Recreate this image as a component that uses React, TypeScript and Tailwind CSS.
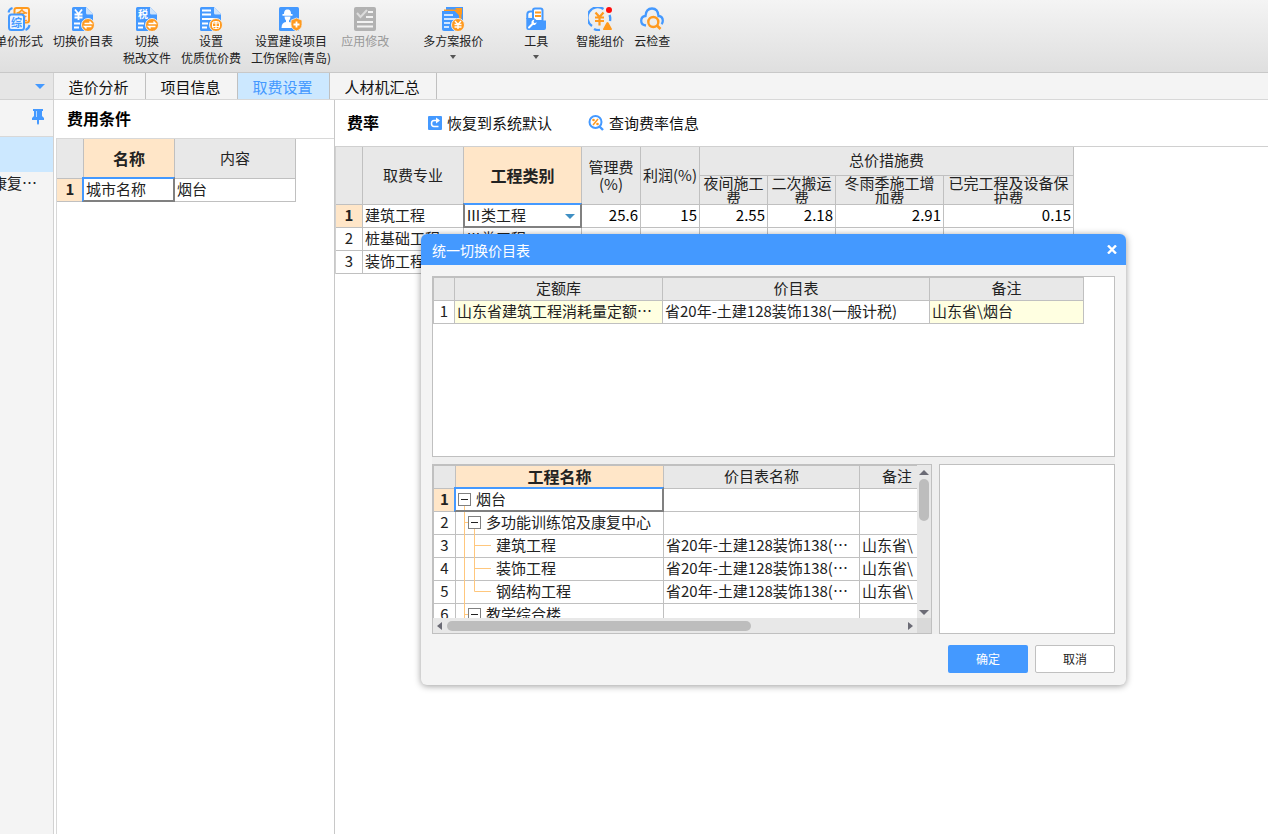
import { clsx } from "clsx";
import { useState, type ReactNode } from "react";

const BLUE = "#4499ff";
const ORANGE = "#ff9a1f";

function DocBase({ children }: { children?: ReactNode }) {
  return (
    <svg viewBox="0 0 24 24" className="size-6">
      <path d="M2.5 0H15l7 7v11h-2v6H2.500Q1 24 1 22.500V1.500Q1 0 2.500 0z" fill={BLUE} />
      <path d="M15 0l7.500 7.500H16.500Q15 7.500 15 6z" fill="#cfe4fb" />
      {children}
    </svg>
  );
}

function SwapBadge() {
  return (
    <>
      <circle cx="17" cy="18" r="6.500" fill={ORANGE} stroke="#eeeeee" />
      <path d="M13.500 16.500h7l-2-2M20.500 19.500h-7l2 2" fill="none" stroke="#fff" strokeWidth="1.400" />
    </>
  );
}

function UnitPriceIcon() {
  return (
    <svg viewBox="0 0 24 24" className="size-6">
      <rect x="7.500" y="1" width="14.500" height="14.500" rx="2" fill="#fff3e2" stroke={ORANGE} strokeWidth="2" />
      <text x="9" y="13" fontSize="12" fontWeight="700" fill={ORANGE}>金</text>
      <rect x="2" y="7.500" width="15" height="15.500" rx="2.500" fill="#eaf3ff" stroke={BLUE} strokeWidth="2" />
      <text x="4" y="19.500" fontSize="11" fontWeight="700" fill={BLUE}>综</text>
      <path d="M1.500 5.500q.5-3.500 4-4.500M22.500 18q-.5 3.500-4 5" fill="none" stroke={BLUE} strokeWidth="2" />
    </svg>
  );
}

function SwitchPriceIcon() {
  return (
    <DocBase>
      <path d="M4 2.500l3.500 4.500L11 2.500M3.500 7.500h8M3.500 10.500h8M7.500 7v6M3 16.500h6M3 20.500h5" fill="none" stroke="#fff" strokeWidth="1.800" />
      <SwapBadge />
    </DocBase>
  );
}

function SwitchTaxIcon() {
  return (
    <DocBase>
      <text x="3" y="11" fontSize="10" fontWeight="700" fill="#fff">税</text>
      <path d="M3 16.500h6M3 20.500h5" stroke="#fff" strokeWidth="1.800" />
      <SwapBadge />
    </DocBase>
  );
}

function QualityFeeIcon() {
  return (
    <DocBase>
      <path d="M3 3.500h9M3 7.500h9M3 12h13M3 16.500h6M3 20.500h5" stroke="#fff" strokeWidth="1.800" />
      <circle cx="17" cy="18" r="6.500" fill={ORANGE} stroke="#eeeeee" />
      <path d="M13 16h8M13 19.500h8M17 14v8" fill="none" stroke="#fff" strokeWidth="1.200" />
      <rect x="13.500" y="14.500" width="7" height="7" rx="2" fill="none" stroke="#fff" strokeWidth="1" />
    </DocBase>
  );
}

function InsuranceIcon() {
  return (
    <svg viewBox="0 0 24 24" className="size-6 overflow-visible">
      <rect width="20" height="24" rx="1.500" fill={BLUE} />
      <path d="M5 7q0-4 2.500-4.500h2q2.500.5 2.500 4.500h1.500v1.800h-10V7zM5.500 9.500h6q0 2.500-1.500 4v1.500h-3v-1.500q-1.500-1.500-1.500-4z" fill="#fff" />
      <path d="M2.500 21q0-5.500 4.500-6h3q4.500.5 4.500 6z" fill="#fff" />
      <path d="M17.500 11l5.500 2.200v4.300q0 4.500-5.500 6.500-5.500-2-5.500-6.500v-4.300z" fill={ORANGE} stroke="#eeeeee" strokeWidth=".8" />
      <path d="M17.500 14.500v6M14.500 17.500h6" stroke="#fff" strokeWidth="1.800" />
    </svg>
  );
}

function ApplyIcon() {
  return (
    <svg viewBox="0 0 24 24" className="size-6">
      <rect x="1" width="22" height="24" rx="2" fill="#b2b2b2" />
      <path d="M4 6l3.500 4L14 3" fill="none" stroke="#dcdcdc" strokeWidth="2" />
      <path d="M15 5h5M13 10h7M4 15h16M4 19.500h16" stroke="#f2f2f2" strokeWidth="2" />
    </svg>
  );
}

function SchemeIcon() {
  return (
    <svg viewBox="0 0 24 24" className="size-6">
      <path d="M5 3V0h17v14" fill={BLUE} />
      <path d="M3 4V2.500h12.500q4.500 1 5 6V14h-3V8l-4-4z" fill={ORANGE} />
      <path d="M14 1h7v7z" fill={ORANGE} />
      <path d="M1 4h12.500l4.500 4.500V24H3q-2 0-2-2z" fill={BLUE} />
      <path d="M3 8h9M3 12h12M3 16h6M3 20h5" stroke="#fff" strokeWidth="1.600" />
      <circle cx="17" cy="18" r="6.500" fill={ORANGE} stroke="#eeeeee" />
      <path d="M14 14l3 3.500 3-3.500M13.500 17.500h7M13.500 20h7M17 17v5" fill="none" stroke="#fff" strokeWidth="1.400" />
    </svg>
  );
}

function ToolsIcon() {
  return (
    <svg viewBox="0 0 24 24" className="size-6">
      <path d="M3.300 12V7.500q0-3 3-3H9" fill="#fff" stroke={BLUE} strokeWidth="2" />
      <path d="M9 14V3.500q0-2 2-2h5.500q2 0 2 2V14z" fill="#fff" stroke={BLUE} strokeWidth="2" />
      <path d="M11 5.500h6M11 9h6" stroke={ORANGE} strokeWidth="1.800" />
      <path d="M2.300 11H10l3 2.500h9V21q0 2-2 2H4.300q-2 0-2-2z" fill={BLUE} />
      <path d="M5 20.500l4-4" stroke="#fff" strokeWidth="2" strokeLinecap="round" />
      <path d="M10.500 12.500q-3.500.5-3 3.500.5 2.500 3.500 2l2-2.500-2.500.5-1-1z" fill="#fff" />
    </svg>
  );
}

function SmartPriceIcon() {
  return (
    <svg viewBox="0 0 24 24" className="size-6">
      <path d="M15.500 2A10 10 0 0 0 4 19M21.500 8q1.200 3 .5 6M6 22q2.500 1.500 6 1" fill="none" stroke={BLUE} strokeWidth="2.300" />
      <path d="M7.500 5.500l4 4.500 4-4.500M7 10.500h9M7 14h9M11.500 10v8.500" fill="none" stroke={ORANGE} strokeWidth="2.200" />
      <path d="M19.500 15q1 0 1.500 1.500l3 5.500q0 1-1 1h-7q-1.500 0-1-1l3-5.500q.5-1.500 1.500-1.500z" fill={ORANGE} />
      <circle cx="21" cy="3" r="3" fill="#ff0d0d" />
    </svg>
  );
}

function CloudCheckIcon() {
  return (
    <svg viewBox="0 0 24 24" className="size-6">
      <path d="M6 18.500Q1.200 18 1.200 13.700 1.200 9.500 5.500 9 6 1.500 12 1.500T18.500 9q4.300.5 4.300 4.700 0 2.300-1.300 3.500" fill="none" stroke={BLUE} strokeWidth="2.300" />
      <circle cx="13.300" cy="15" r="5" fill="none" stroke={ORANGE} strokeWidth="2.400" />
      <path d="M17 18.500l3.500 3.500" stroke={ORANGE} strokeWidth="2.600" />
    </svg>
  );
}

type Tool = {
  lines: string[];
  icon: ReactNode;
  className?: string;
  disabled?: boolean;
  menu?: boolean;
};

const tools: Tool[] = [
  { lines: ["单价形式"], icon: <UnitPriceIcon />, className: "-ml-[5px]" },
  { lines: ["切换价目表"], icon: <SwitchPriceIcon /> },
  { lines: ["切换", "税改文件"], icon: <SwitchTaxIcon /> },
  { lines: ["设置", "优质优价费"], icon: <QualityFeeIcon /> },
  { lines: ["设置建设项目", "工伤保险(青岛)"], icon: <InsuranceIcon /> },
  { lines: ["应用修改"], icon: <ApplyIcon />, disabled: true },
  { lines: ["多方案报价"], icon: <SchemeIcon />, className: "ml-6", menu: true },
  { lines: ["工具"], icon: <ToolsIcon />, className: "ml-[31px]", menu: true },
  { lines: ["智能组价"], icon: <SmartPriceIcon />, className: "ml-[18px]" },
  { lines: ["云检查"], icon: <CloudCheckIcon /> },
];

const tabs = ["造价分析", "项目信息", "取费设置", "人材机汇总"];

const rates = [
  { name: "建筑工程", kind: "Ⅲ类工程", values: ["25.6", "15", "2.55", "2.18", "2.91", "0.15"] },
  { name: "桩基础工程", kind: "Ⅲ类工程", values: ["", "", "", "", "", ""] },
  { name: "装饰工程", kind: "Ⅲ类工程", values: ["", "", "", "", "", ""] },
];

const measures = ["夜间施工费", "二次搬运费", "冬雨季施工增加费", "已完工程及设备保护费"];

const priceList = "省20年-土建128装饰138(…";

const projects = [
  { name: "烟台", level: 0, price: "", note: "" },
  { name: "多功能训练馆及康复中心", level: 1, price: "", note: "" },
  { name: "建筑工程", level: 2, price: priceList, note: "山东省\\" },
  { name: "装饰工程", level: 2, price: priceList, note: "山东省\\" },
  { name: "钢结构工程", level: 2, price: priceList, note: "山东省\\", last: true },
  { name: "教学综合楼", level: 1, price: "", note: "" },
];

const line = "border-r border-b border-[#c0c0c0]";
const cell = `${line} h-[23px] overflow-hidden whitespace-nowrap pb-0.5`;
const head = `${line} bg-[#e8e8e8] pb-0.5 font-normal`;
const headActive = `${line} bg-[#ffe6c8] pb-0.5 text-base leading-5 font-bold`;
const grid = "table-fixed border-separate border-spacing-0 text-[15px] leading-5 text-[#222]";

function Triangle({ dir, className }: { dir: "up" | "down" | "left" | "right"; className?: string }) {
  const points = {
    up: "0,6 10,6 5,1",
    down: "0,2 10,2 5,7",
    left: "7,0 7,8 2,4",
    right: "3,0 3,8 8,4",
  }[dir];

  return (
    <svg viewBox="0 0 10 8" className={clsx("h-2 w-2.5 fill-current", className)}>
      <polygon points={points} />
    </svg>
  );
}

// Two-tone outline drawn over the borders of the active cell.
function Focus({ gray }: { gray?: boolean }) {
  return (
    <span
      className={clsx(
        "pointer-events-none absolute -top-0.5 -right-px -bottom-px border-2 border-[#808080] border-t-[#4499ff]",
        gray ? "-left-px" : "-left-0.5 border-l-[#4499ff]",
      )}
    />
  );
}

function RowNumber({ n, active }: { n: number; active?: boolean }) {
  return (
    <th scope="row" className={clsx(cell, "text-center", active ? "bg-[#ffe6c8] font-bold" : "bg-white font-normal")}>
      {n}
    </th>
  );
}

function Toolbar() {
  return (
    <header className="flex h-[73px] shrink-0 items-start gap-2.5 overflow-hidden border-b border-[#c8c8c8] bg-linear-to-b from-[#f4f4f4] to-[#dfdfdf] pt-[7px]">
      {tools.map((tool) => (
        <button
          key={tool.lines.join("")}
          type="button"
          disabled={tool.disabled}
          className={clsx(
            "flex shrink-0 flex-col items-center text-xs leading-[17px]",
            tool.disabled ? "text-[#999]" : "text-[#222]",
            tool.className,
          )}
        >
          {tool.icon}
          <span className="mt-px whitespace-nowrap">
            {tool.lines.map((text) => (
              <span key={text} className="block">
                {text}
              </span>
            ))}
          </span>
          {tool.menu ? (
            <svg viewBox="0 0 6 4" className="mt-1.5 h-1 w-1.5 fill-[#555]">
              <polygon points="0,0 6,0 3,4" />
            </svg>
          ) : null}
        </button>
      ))}
    </header>
  );
}

function Sidebar() {
  return (
    <aside className="flex w-[54px] shrink-0 flex-col overflow-hidden border-r border-[#d2d2d2] bg-[#f4f4f4]">
      <button type="button" aria-label="展开" className="flex h-[27px] items-center justify-end border-b border-[#d2d2d2] bg-[#e6e6e6] pr-2 text-[#4499ff]">
        <Triangle dir="down" className="w-2" />
      </button>
      <div className="flex h-[37px] items-start justify-end border-b border-[#d8d8d8] pt-2 pr-2">
        <button type="button" aria-label="固定">
          <svg viewBox="0 0 14 17" className="h-[17px] w-3.5 fill-[#4499ff]">
            <path d="M2 1h10v2h-1v5l2 2v2H8v3.500l-1 1.500-1-1.500V12H1v-2l2-2V3H2z" />
            <path d="M5 3h1v6H5z" fill="#b9d9ff" />
          </svg>
        </button>
      </div>
      <div className="h-[35px] bg-[#cce8ff]" />
      <p className="-ml-2 py-px text-[15px] leading-5 whitespace-nowrap text-[#222]">康复…</p>
    </aside>
  );
}

function Conditions() {
  return (
    <section className="w-[281px] shrink-0 border-r border-[#c8c8c8] pl-0.5">
      <h2 className="flex h-[38px] items-center pb-0.5 pl-[11px] text-base font-bold">费用条件</h2>
      <div className="h-full border-t border-l border-[#d8d8d8]">
        <table className={clsx(grid, "w-[239px]")}>
          <colgroup>
            <col className="w-[27px]" />
            <col className="w-[91px]" />
            <col className="w-[121px]" />
          </colgroup>
          <thead>
            <tr className="h-10">
              <th className={head} />
              <th className={headActive}>名称</th>
              <th className={head}>内容</th>
            </tr>
          </thead>
          <tbody>
            <tr>
              <RowNumber n={1} active />
              <td className={clsx(line, "relative pb-0.5 pl-0.5")}>
                城市名称
                <Focus />
              </td>
              <td className={clsx(cell, "pl-0.5")}>烟台</td>
            </tr>
          </tbody>
        </table>
      </div>
    </section>
  );
}

function Rates() {
  return (
    <section className="min-w-0 flex-1">
      <div className="flex h-[46px] items-center pl-3 text-[15px] text-[#111]">
        <h2 className="w-[81px] pb-0.5 text-base font-bold text-black">费率</h2>
        <button type="button" className="flex items-center gap-[5px]">
          <svg viewBox="0 0 14 14" className="size-3.5">
            <rect width="14" height="14" rx="1" fill={BLUE} />
            <path d="M10.500 4.500H6q-2.500 0-2.500 3T6 10.500h4.500" fill="none" stroke="#fff" strokeWidth="1.500" />
            <path d="M8 1.500l4 3-4 3z" fill="#fff" />
          </svg>
          恢复到系统默认
        </button>
        <button type="button" className="ml-9 flex items-center gap-[5px]">
          <svg viewBox="0 0 16 16" className="size-4">
            <circle cx="7.500" cy="7" r="6" fill="#fff" stroke={BLUE} strokeWidth="2" />
            <path d="M11.500 11.500l3.500 3.500" stroke={BLUE} strokeWidth="2.400" />
            <path d="M5 10l5-6" stroke={ORANGE} strokeWidth="1.500" />
            <circle cx="5.500" cy="5" r="1.300" fill={ORANGE} />
            <circle cx="9.500" cy="9" r="1.300" fill={ORANGE} />
          </svg>
          查询费率信息
        </button>
      </div>
      <div className="border-t border-l border-[#d0d0d0]">
        <table className={clsx(grid, "w-[738px]")}>
          <colgroup>
            <col className="w-[27px]" />
            <col className="w-[101px]" />
            <col className="w-[118px]" />
            <col className="w-[59px]" />
            <col className="w-[59px]" />
            <col className="w-[68px]" />
            <col className="w-[68px]" />
            <col className="w-[108px]" />
            <col className="w-[130px]" />
          </colgroup>
          <thead>
            <tr className="h-[29px]">
              <th rowSpan={2} className={head} />
              <th rowSpan={2} className={head}>取费专业</th>
              <th rowSpan={2} className={headActive}>工程类别</th>
              <th rowSpan={2} className={clsx(head, "leading-[17px]")}>
                管理费
                <br />
                (%)
              </th>
              <th rowSpan={2} className={clsx(head, "whitespace-nowrap")}>利润(%)</th>
              <th colSpan={4} className={head}>总价措施费</th>
            </tr>
            <tr>
              {measures.map((name) => (
                <th key={name} className={clsx(line, "bg-[#e8e8e8] font-normal")}>
                  <div className="flex h-7 items-center justify-center overflow-hidden px-[3px] leading-[15px]">{name}</div>
                </th>
              ))}
            </tr>
          </thead>
          <tbody>
            {rates.map((row, i) => (
              <tr key={row.name}>
                <RowNumber n={i + 1} active={i === 0} />
                <td className={clsx(cell, "pl-0.5")}>{row.name}</td>
                <td className={clsx(line, "relative pl-0.5", i > 0 && "pb-0.5")}>
                  {i === 0 ? (
                    <>
                      <select aria-label="工程类别" defaultValue={row.kind} className="block h-[22px] w-full appearance-none bg-transparent pb-0.5 leading-5 outline-none">
                        <option>Ⅰ类工程</option>
                        <option>Ⅱ类工程</option>
                        <option>Ⅲ类工程</option>
                      </select>
                      <Triangle dir="down" className="pointer-events-none absolute top-[7px] right-1.5 text-[#3f8fc4]" />
                      <Focus gray />
                    </>
                  ) : (
                    row.kind
                  )}
                </td>
                {row.values.map((value, n) => (
                  <td key={n} className={clsx(cell, "pr-0.5 text-right text-black")}>
                    {value}
                  </td>
                ))}
              </tr>
            ))}
          </tbody>
        </table>
      </div>
    </section>
  );
}

function TreeGuides({ level, last }: { level: number; last?: boolean }) {
  return (
    <svg viewBox="0 0 40 23" className="absolute top-0 left-0 h-[23px] w-10" stroke="#ffc77d" fill="none">
      {level === 0 ? <path d="M8.500 17v6" /> : <path d="M8.500 0v23" />}
      {level === 1 ? <path d="M8.500 10.500H12M18.500 17v6" /> : null}
      {level === 2 ? <path d={last ? "M18.500 0v10.500H35" : "M18.500 0v23M18.500 10.500H35"} /> : null}
    </svg>
  );
}

function ProjectTable() {
  return (
    <div className="h-[170px] w-[500px] shrink-0 border border-[#c0c0c0] bg-[#e8e8e8]">
      <div className="flex h-[153px]">
        <div className="min-w-0 flex-1 overflow-hidden border-t border-l border-[#c0c0c0] bg-white">
          <table className={clsx(grid, "w-[501px]")}>
            <colgroup>
              <col className="w-[22px]" />
              <col className="w-[208px]" />
              <col className="w-[196px]" />
              <col className="w-[75px]" />
            </colgroup>
            <thead>
              <tr className="h-[23px]">
                <th className={head} />
                <th className={headActive}>工程名称</th>
                <th className={head}>价目表名称</th>
                <th className={head}>备注</th>
              </tr>
            </thead>
            <tbody>
              {projects.map((row, i) => (
                <tr key={`${row.name}-${i}`}>
                  <RowNumber n={i + 1} active={i === 0} />
                  <td className={clsx(line, "relative pb-0.5")}>
                    <TreeGuides level={row.level} last={row.last} />
                    <div
                      className={clsx(
                        "relative flex items-center gap-[5px] whitespace-nowrap",
                        row.level === 0 && "pl-0.5",
                        row.level === 1 && "pl-3",
                        row.level === 2 && "pl-10",
                      )}
                    >
                      {row.level < 2 ? (
                        <button type="button" aria-label="折叠" className="flex size-[13px] items-center justify-center border border-[#808080] bg-white">
                          <span className="h-px w-[7px] bg-[#222]" />
                        </button>
                      ) : null}
                      {row.name}
                    </div>
                    {i === 0 ? <Focus /> : null}
                  </td>
                  <td className={clsx(cell, "pl-0.5")}>{row.price}</td>
                  <td className={clsx(cell, "pl-0.5")}>{row.note}</td>
                </tr>
              ))}
            </tbody>
          </table>
        </div>
        <div className="flex w-3.5 flex-col items-center pt-1 pb-0.5 text-[#6b6b75]">
          <Triangle dir="up" />
          <div className="mt-0.5 h-[42px] w-2.5 rounded-full bg-[#bdbdbd]" />
          <Triangle dir="down" className="mt-auto" />
        </div>
      </div>
      <div className="flex h-[15px] items-center text-[#6b6b75]">
        <Triangle dir="left" className="ml-0.5" />
        <div className="ml-0.5 h-2.5 w-[304px] rounded-full bg-[#bdbdbd]" />
        <Triangle dir="right" className="mr-0.5 ml-auto" />
        <div className="h-full w-3.5 bg-[#d9d9d9]" />
      </div>
    </div>
  );
}

function SwitchDialog() {
  return (
    <div
      role="dialog"
      aria-labelledby="switch-title"
      className="absolute top-[234px] left-[421px] w-[705px] rounded-md bg-[#f4f4f4] shadow-[0_1px_7px_rgba(0,0,0,0.4)]"
    >
      <div className="flex h-[31px] items-center justify-between rounded-t-md bg-[#4499ff] pr-2 pl-[11px] text-white">
        <h2 id="switch-title" className="text-sm">统一切换价目表</h2>
        <button type="button" aria-label="关闭" className="flex size-3 items-center justify-center">
          <svg viewBox="0 0 10 9" className="h-[9px] w-2.5" stroke="#fff" strokeWidth="2.400">
            <path d="M1 .5l8 8M9 .5l-8 8" />
          </svg>
        </button>
      </div>
      <div className="px-[11px] pt-[11px] pb-3">
        <div className="bg-[#efefef]">
          <div className="h-[181px] border border-[#c0c0c0] bg-white">
            <table className={clsx(grid, "w-[651px] border-t border-l border-[#c0c0c0]")}>
              <colgroup>
                <col className="w-[21px]" />
                <col className="w-[208px]" />
                <col className="w-[267px]" />
                <col className="w-[154px]" />
              </colgroup>
              <thead>
                <tr className="h-[23px]">
                  <th className={head} />
                  <th className={head}>定额库</th>
                  <th className={head}>价目表</th>
                  <th className={head}>备注</th>
                </tr>
              </thead>
              <tbody>
                <tr>
                  <RowNumber n={1} />
                  <td className={clsx(cell, "bg-[#ffffe1] pl-0.5")}>山东省建筑工程消耗量定额…</td>
                  <td className={clsx(cell, "pl-0.5")}>省20年-土建128装饰138(一般计税)</td>
                  <td className={clsx(cell, "bg-[#ffffe1] pl-0.5")}>山东省\烟台</td>
                </tr>
              </tbody>
            </table>
          </div>
          <div className="mt-[7px] flex gap-[7px]">
            <ProjectTable />
            <div className="flex-1 border border-[#c0c0c0] bg-white" />
          </div>
        </div>
        <div className="mt-[11px] flex justify-end gap-[7px] text-xs">
          <button type="button" className="h-7 w-20 rounded-xs bg-[#4499ff] text-white">
            确定
          </button>
          <button type="button" className="h-7 w-20 rounded-xs border border-[#c0c0c0] bg-white text-[#222]">
            取消
          </button>
        </div>
      </div>
    </div>
  );
}

export default function App() {
  const [tab, setTab] = useState("取费设置");

  return (
    <div lang="zh-CN" className="relative flex h-screen flex-col overflow-hidden bg-white font-['Noto_Sans_CJK_SC',sans-serif] text-black">
      <Toolbar />
      <div className="flex min-h-0 flex-1">
        <Sidebar />
        <div className="flex min-w-0 flex-1 flex-col">
          <nav className="flex h-[27px] shrink-0 border-b border-[#d8d8d8] bg-[#f4f4f4]">
            {tabs.map((name) => (
              <button
                key={name}
                type="button"
                onClick={() => setTab(name)}
                className={clsx(
                  "border-r border-[#c0c0c0] pt-0.5 pr-0.5 text-[15px] leading-5",
                  name.length > 4 ? "w-[107px]" : "w-23",
                  tab === name ? "bg-[#cce8ff] text-[#4499ff]" : "text-[#111]",
                )}
              >
                {name}
              </button>
            ))}
          </nav>
          <main className="flex min-h-0 flex-1 overflow-hidden">
            <Conditions />
            <Rates />
          </main>
        </div>
      </div>
      <SwitchDialog />
    </div>
  );
}
